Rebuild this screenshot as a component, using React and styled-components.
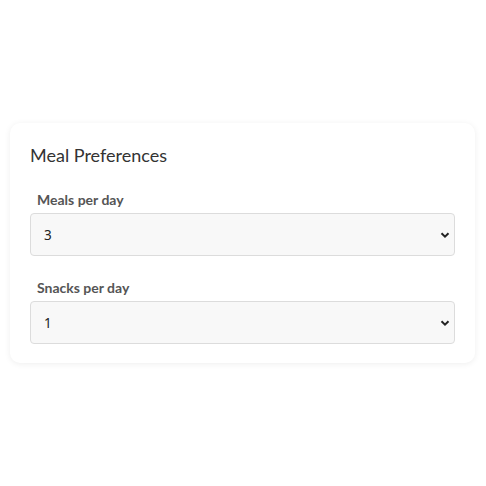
import styled, { createGlobalStyle } from "styled-components";

const GlobalStyle = createGlobalStyle`
  * { box-sizing: border-box; }
  html, body { margin: 0; padding: 0; background: #ffffff; }
  #root { min-height: 486px; }
`;

const Page = styled.div`
  min-height: 486px;
  display: flex;
  align-items: center;
  padding: 0 11px 0 10px;
  font-family: Lato, "Noto Sans", sans-serif;
`;

const Card = styled.div`
  width: 100%;
  background: #fff;
  border-radius: 10px;
  box-shadow: 0 1px 6px rgba(0, 0, 0, 0.07);
  padding: 20px 20px 19px;
`;

const Title = styled.h2`
  margin: 0 0 24px;
  font-size: 18px;
  font-weight: 400;
  color: #333;
  line-height: 24px;
`;

const Field = styled.div`
  display: flex;
  flex-direction: column;
  margin-top: ${(p) => (p.$first ? "0" : "23px")};
`;

const Label = styled.label`
  font-size: 14px;
  font-weight: 700;
  color: #555;
  padding-left: 7px;
  line-height: 17px;
  margin-bottom: 5px;
`;

const SelectWrap = styled.div`
  position: relative;
`;

const Select = styled.select`
  width: 100%;
  height: 43px;
  appearance: none;
  -webkit-appearance: none;
  background: #f8f8f8;
  border: 1px solid #dcdcdc;
  border-radius: 4px;
  padding: 0 30px 0 13px;
  font-family: "Noto Sans", "Open Sans", sans-serif;
  font-size: 13.5px;
  color: #222;
  outline: none;
`;

const Arrow = styled.svg`
  position: absolute;
  right: 5px;
  top: 50%;
  transform: translateY(-50%);
  pointer-events: none;
`;

const Chevron = () => (
  <Arrow width="10" height="8" viewBox="0 0 10 8">
    <path d="M1.5 2.2 L5 5.6 L8.5 2.2" fill="none" stroke="#222" strokeWidth="2" />
  </Arrow>
);

const App = () => {
  return (
    <Page>
      <GlobalStyle />
      <Card>
        <Title>Meal Preferences</Title>
        <Field $first>
          <Label>Meals per day</Label>
          <SelectWrap>
            <Select defaultValue="3">
              <option value="1">1</option>
              <option value="2">2</option>
              <option value="3">3</option>
              <option value="4">4</option>
              <option value="5">5</option>
            </Select>
            <Chevron />
          </SelectWrap>
        </Field>
        <Field>
          <Label>Snacks per day</Label>
          <SelectWrap>
            <Select defaultValue="1">
              <option value="0">0</option>
              <option value="1">1</option>
              <option value="2">2</option>
              <option value="3">3</option>
            </Select>
            <Chevron />
          </SelectWrap>
        </Field>
      </Card>
    </Page>
  );
};

export default App;
